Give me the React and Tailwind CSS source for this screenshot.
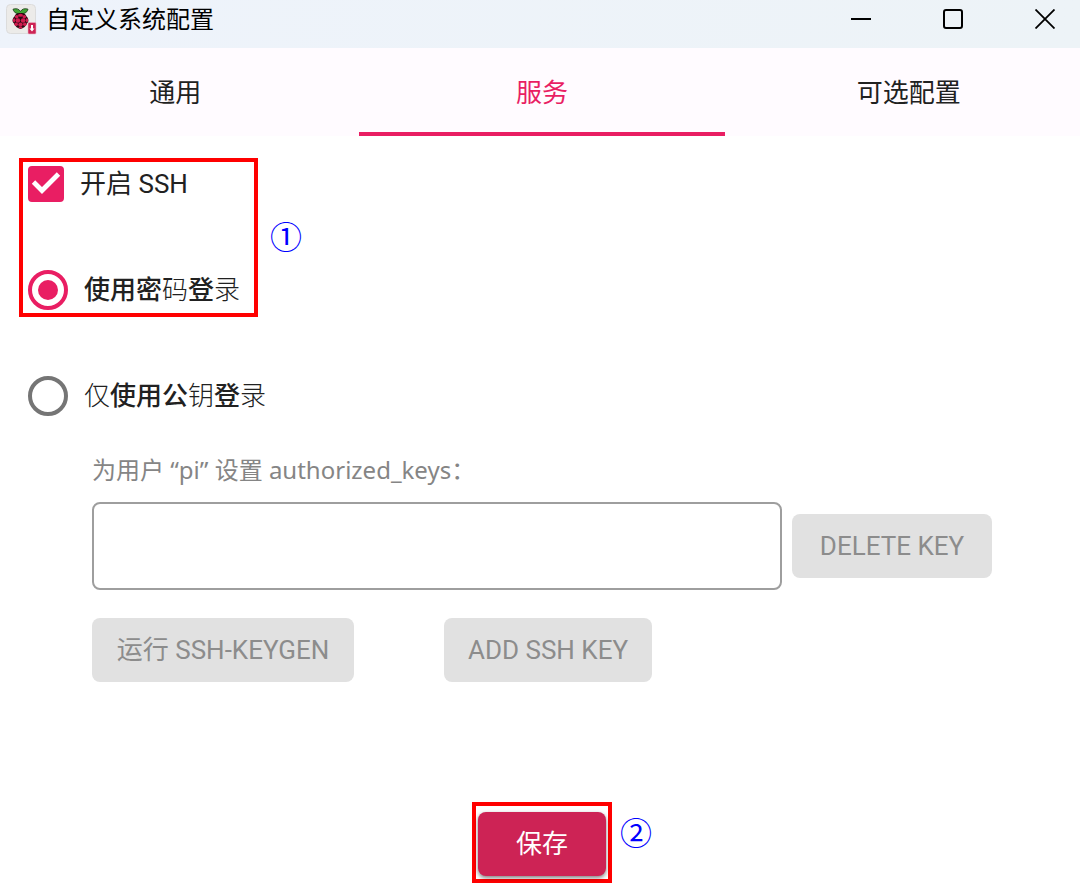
import React, { useState } from 'react';
import clsx from 'clsx';

const TABS = ['通用', '服务', '可选配置'];

function AppIcon() {
  return (
    <svg className="w-8 h-8 shrink-0" viewBox="0 0 32 32" aria-hidden="true">
      <rect x="0.5" y="0.5" width="29" height="29" rx="4" fill="#ecebe9" stroke="#dcdcdc" />
      {/* leaves */}
      <path d="M14.500 9.500C11.500 10 8 9.200 7 5.200C10 4 13 4.800 14.500 7.500C16 4.800 19 4 22 5.200C21 9.200 17.500 10 14.500 9.500Z" fill="#3fa535" stroke="#1c3a18" strokeWidth="0.800" />
      {/* berry */}
      <path d="M14.500 9C17.500 8.500 20 10 20.500 12.500C23 14.500 23 18 21 19.500C20 22.500 17 24.500 14.500 25C12 24.500 9 22.500 8 19.500C6 18 6 14.500 8.500 12.500C9 10 11.500 8.500 14.500 9Z" fill="#2a0a14" />
      <g fill="#d01c50">
        <ellipse cx="14.500" cy="11.200" rx="2.500" ry="1.500" />
        <ellipse cx="10.700" cy="12.800" rx="1.800" ry="1.700" />
        <ellipse cx="18.300" cy="12.800" rx="1.800" ry="1.700" />
        <circle cx="11.900" cy="16.500" r="2.300" />
        <circle cx="17.100" cy="16.500" r="2.300" />
        <ellipse cx="8.100" cy="16.300" rx="1.200" ry="2.100" />
        <ellipse cx="20.900" cy="16.300" rx="1.200" ry="2.100" />
        <circle cx="14.500" cy="20.600" r="2.200" />
        <circle cx="10.200" cy="20.200" r="1.800" />
        <circle cx="18.800" cy="20.200" r="1.800" />
        <ellipse cx="14.500" cy="23.700" rx="2" ry="0.900" />
      </g>
      <rect x="22" y="18.500" width="8" height="11.500" rx="1" fill="#cd2355" stroke="#e9b6c4" strokeWidth="0.600" />
      <path d="M25 21h2v3.500h1.500l-2.500 3-2.500-3h1.500z" fill="#fff" />
    </svg>
  );
}

function TitleBar() {
  return (
    <header className="flex items-start justify-between h-12 bg-linear-to-r from-[#eef3fb] to-[#edf3f7] text-black">
      <div className="flex items-center gap-2 pl-[6px] h-10">
        <AppIcon />
        <h1 className="text-[24px] leading-8">自定义系统配置</h1>
      </div>
      <div className="flex items-center h-[38px] gap-[52px] pr-[15px]">
        <button type="button" aria-label="最小化" className="w-10 h-8 grid place-items-center">
          <svg className="w-5 h-5" viewBox="0 0 20 20"><path d="M0 10h20" stroke="currentColor" strokeWidth="2" /></svg>
        </button>
        <button type="button" aria-label="最大化" className="w-10 h-8 grid place-items-center">
          <svg className="w-5 h-5" viewBox="0 0 20 20"><rect x="1" y="1" width="18" height="18" rx="2" fill="none" stroke="currentColor" strokeWidth="2" /></svg>
        </button>
        <button type="button" aria-label="关闭" className="w-10 h-8 grid place-items-center">
          <svg className="w-5 h-5" viewBox="0 0 20 20"><path d="M0.500 0.500l19 19M19.500 0.500l-19 19" stroke="currentColor" strokeWidth="1.800" /></svg>
        </button>
      </div>
    </header>
  );
}

function RadioOption({ id, value, selected, onSelect, children }) {
  return (
    <div className="flex items-center gap-4">
      <input
        type="radio"
        id={id}
        name="auth"
        value={value}
        checked={selected === value}
        onChange={() => onSelect(value)}
        className="appearance-none shrink-0 w-10 h-10 rounded-full border-4 border-[#757575] grid place-content-center checked:border-[#e91e63] checked:before:block checked:before:w-5 checked:before:h-5 checked:before:rounded-full checked:before:bg-[#e91e63]"
      />
      <label htmlFor={id} className="text-[26px] leading-8 font-medium">{children}</label>
    </div>
  );
}

function GreyButton({ className, children }) {
  return (
    <button type="button" disabled className={clsx('h-16 rounded-lg bg-[#e1e1e1] text-[#8c8c8c] text-[26px] leading-8 whitespace-nowrap', className)}>
      {children}
    </button>
  );
}

export default function App() {
  const [tab, setTab] = useState('服务');
  const [ssh, setSsh] = useState(true);
  const [auth, setAuth] = useState('password');
  const [key, setKey] = useState('');

  return (
    <div className="min-h-screen bg-white text-[#212121] overflow-hidden font-[Roboto,'Noto_Sans_CJK_SC',sans-serif]">
      <TitleBar />

      {/* Tabs */}
      <nav className="bg-[#fffbff] overflow-hidden">
        <div className="grid grid-cols-3 -ml-2 -mr-3">
          {TABS.map((name) => (
            <button
              key={name}
              type="button"
              onClick={() => setTab(name)}
              className={clsx('h-[88px] pt-[6px] border-b-4 text-[26px] leading-8', tab === name ? 'border-[#e91e63] text-[#e91e63]' : 'border-transparent')}
            >
              {name}
            </button>
          ))}
        </div>
      </nav>

      <main className="pt-[22px]">
        <div className="flex items-center gap-3 pl-[19px]">
          <div className="w-[239px] border-4 border-[#ff0000] pl-[5px] pt-1 pb-[3px]">
            <div className="flex items-center gap-4 mb-[68px]">
              <span className="relative w-9 h-9 shrink-0">
                <input
                  id="ssh"
                  type="checkbox"
                  checked={ssh}
                  onChange={(e) => setSsh(e.target.checked)}
                  className="appearance-none block w-9 h-9 rounded border-4 border-[#757575] checked:border-[#e91e63] checked:bg-[#e91e63]"
                />
                {ssh && (
                  <svg className="absolute inset-0 w-9 h-9 pointer-events-none" viewBox="0 0 36 36">
                    <path d="M5.500 16l8.500 8.500L30.500 8" fill="none" stroke="#fff" strokeWidth="4.800" />
                  </svg>
                )}
              </span>
              <label htmlFor="ssh" className="text-[26px] leading-8">开启 SSH</label>
            </div>
            <RadioOption id="auth-password" value="password" selected={auth} onSelect={setAuth}>
              使用密<span className="font-light">码</span>登<span className="font-light">录</span>
            </RadioOption>
          </div>
          <span className="text-[32px] leading-8 text-[#0000ff]">①</span>
        </div>

        <div className="pl-7 pt-[59px]">
          <RadioOption id="auth-key" value="key" selected={auth} onSelect={setAuth}>
            <span className="font-light">仅</span>使用公<span className="font-light">钥</span>登<span className="font-light">录</span>
          </RadioOption>
        </div>

        <div className="pl-[92px] pr-[88px] pt-[38px]">
          <label htmlFor="keys" className="block text-[24px] leading-8 text-[#858585] font-['Noto_Sans','Noto_Sans_CJK_SC',sans-serif]">
            为用户 “pi” 设置 authorized_keys：
          </label>
          <div className="flex items-center gap-[10px] mt-4">
            <input
              id="keys"
              type="text"
              value={key}
              onChange={(e) => setKey(e.target.value)}
              className="flex-1 min-w-0 h-[88px] px-4 rounded-lg border-2 border-[#9e9e9e] text-[26px]"
            />
            <GreyButton className="w-[200px]">DELETE KEY</GreyButton>
          </div>
          <div className="flex gap-[90px] mt-7">
            <GreyButton className="w-[262px]">运行 SSH-KEYGEN</GreyButton>
            <GreyButton className="w-[208px]">ADD SSH KEY</GreyButton>
          </div>
        </div>

        <div className="flex justify-center pt-[120px] pl-1">
          <div className="relative border-4 border-[#ff0000] px-[2px] pt-[6px] pb-[3px]">
            <button type="button" className="block w-32 h-16 rounded-lg bg-[#cd2355] text-white text-[26px] leading-8 shadow-[0_2px_4px_rgba(0,0,0,0.5)]">
              保存
            </button>
            <span className="absolute left-full top-3 ml-3 text-[32px] leading-8 text-[#0000ff]">②</span>
          </div>
        </div>
      </main>
    </div>
  );
}
